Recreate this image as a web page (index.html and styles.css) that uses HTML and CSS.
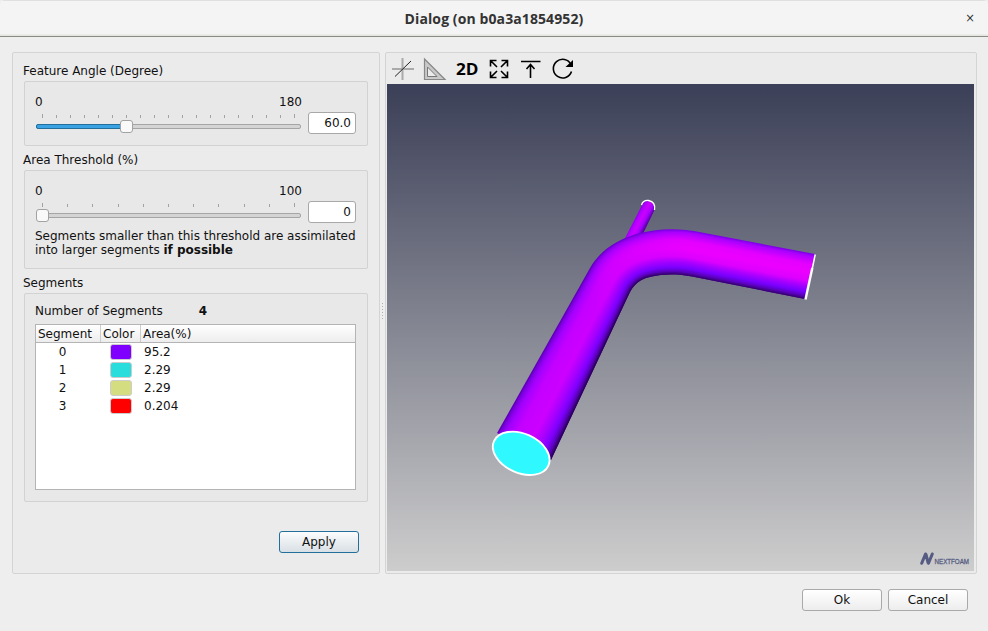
FILE: index.html
```html
<!DOCTYPE html>
<html lang="en">
<head>
<meta charset="utf-8">
<title>Dialog</title>
<link rel="stylesheet" href="styles.css">
</head>
<body>
<header class="titlebar"><h1>Dialog (on b0a3a1854952)</h1><span class="close">×</span></header>
<main class="content">
  <section class="panel settings">
    <h2>Feature Angle (Degree)</h2>
    <div class="group angle">
      <div class="row">
        <div class="range">
          <div class="limits"><span>0</span><span>180</span></div>
          <svg class="slider" width="266" height="24" data-steps="18" data-value="6"></svg>
        </div>
        <div class="field">60.0</div>
      </div>
    </div>
    <h2>Area Threshold (%)</h2>
    <div class="group area">
      <div class="row">
        <div class="range">
          <div class="limits"><span>0</span><span>100</span></div>
          <svg class="slider" width="266" height="24" data-steps="10" data-value="0"></svg>
        </div>
        <div class="field">0</div>
      </div>
      <p>Segments smaller than this threshold are assimilated<br>into larger segments <b>if possible</b></p>
    </div>
    <h2>Segments</h2>
    <div class="group segments">
      <div class="count"><span>Number of Segments</span><b>4</b></div>
      <div class="table">
        <div class="thead"><span>Segment</span><span>Color</span><span>Area(%)</span></div>
        <div class="trow"><span>0</span><i class="swatch violet"></i><span>95.2</span></div>
        <div class="trow"><span>1</span><i class="swatch cyan"></i><span>2.29</span></div>
        <div class="trow"><span>2</span><i class="swatch olive"></i><span>2.29</span></div>
        <div class="trow"><span>3</span><i class="swatch red"></i><span>0.204</span></div>
      </div>
    </div>
    <button class="btn apply">Apply</button>
  </section>
  <div class="handle"></div>
  <section class="panel viewer">
    <div class="toolbar">
      <svg width="200" height="31" viewBox="387 53 200 31" fill="none">
        <path d="M392 69H414M402.500 58V80" stroke="#aaa" stroke-width="2"/>
        <path d="M395 76.500L411 61" stroke="#222" stroke-width="1"/>
        <path d="M424.500 59V79.500H445Z" fill="#c9c9c9" stroke="#888" stroke-width="1.200"/>
        <path d="M427.500 67V76.500H437Z" fill="#ebebeb" stroke="#777"/>
        <text x="456" y="75" class="two-d" textLength="22.500" lengthAdjust="spacingAndGlyphs">2D</text>
        <g stroke="#000" stroke-width="1.600">
          <path d="M490.500 66.500V60.500H496.500M490.500 60.500L497 67M501.500 60.500H507.500V66.500M507.500 60.500L501 67M490.500 71.500V77.500H496.500M490.500 77.500L497 71M501.500 77.500H507.500V71.500M507.500 77.500L501 71"/>
          <path d="M521 61.500H540.500M530.500 78V65M526.500 69L530.500 64.500L534.500 69"/>
          <path d="M571 64.500A9.300 9.300 0 1 0 571.500 71.500"/>
        </g>
        <path d="M573 60V67H565.500Z" fill="#000"/>
      </svg>
    </div>
    <svg class="scene" width="587" height="487" viewBox="387 84 587 487">
      <defs>
        <linearGradient id="bg" x2="0" y2="1"><stop stop-color="#3b3f57"/><stop offset="1" stop-color="#cdcdcd"/></linearGradient>
        <linearGradient id="branch" gradientUnits="userSpaceOnUse" x1="633" y1="219" x2="646" y2="226"><stop stop-color="#7a00d8"/><stop offset=".25" stop-color="#b000ff"/><stop offset=".5" stop-color="#cc00ff"/><stop offset=".75" stop-color="#a800ff"/><stop offset="1" stop-color="#5b00a8"/></linearGradient>
      </defs>
      <rect x="387" y="84" width="587" height="487" fill="url(#bg)"/>
      <path d="M624 240L641.500 206Q643 201 648.500 201Q655 203 654.500 210L640 240Z" fill="url(#branch)"/>
      <path d="M641.500 205Q643 200 648.500 200.500Q656 202 654.500 210" fill="none" stroke="#fff" stroke-width="1.300"/>
      <g id="pipe"></g>
      <path d="M815.200 254.500L812 270" stroke="#fff" stroke-width="1.500"/>
      <path d="M812.300 268L805.500 299.500" stroke="#fff" stroke-width="2.400"/>
      <ellipse cx="521.200" cy="453.300" rx="29.800" ry="19.600" transform="rotate(24.200 521.200 453.300)" fill="#2ff9ff" stroke="#fff" stroke-width="1.900"/>
      <path d="M921.700 563.300L925.500 554M928.500 563.300L932.300 554M926 554.500L928.200 563" stroke="#555b82" stroke-width="3" stroke-linecap="round" fill="none"/>
      <text class="brand" x="934.500" y="564" textLength="34.500" lengthAdjust="spacingAndGlyphs">NEXTFOAM</text>
    </svg>
  </section>
</main>
<footer><button class="btn">Ok</button><button class="btn">Cancel</button></footer>
<script src="scene.js"></script>
</body>
</html>
```
FILE: styles.css
```css
* { box-sizing: border-box; }
body { margin: 0; width: 988px; height: 631px; overflow: hidden; background: #eee; color: #111; font: 12px/14px "DejaVu Sans", sans-serif; }
.titlebar { height: 37px; background: linear-gradient(#e0e0e0 0 1px, #f4f4f4 1px 34px, #e4e4e0 35px); border-bottom: 1px solid #8a8c84; border-radius: 5px 5px 0 0; display: grid; grid-template-columns: 36px 1fr 36px; align-items: center; }
.titlebar h1 { grid-column: 2; margin: 2px 0 0; font: bold 14px/20px "Open Sans", sans-serif; letter-spacing: .1px; color: #333; text-align: center; }
.close { text-align: center; font-size: 11.5px; color: #333; }
.content { display: flex; padding: 15px 0 0 12px; }
.panel { height: 522px; border: 1px solid #d4d4d4; border-radius: 2px; background: #ebebeb; }
.settings { width: 368px; padding: 11px 11px 0 10px; display: flex; flex-direction: column; }
h2 { margin: 0 0 3px; font: inherit; height: 14px; }
.group { margin: 0 0 7px 1px; border: 1px solid #d2d2d2; border-radius: 2px; background: #e8e8e8; padding: 13px 11px 0 10px; }
.angle { height: 65px; }
.area { height: 99px; }
.segments { height: 209px; padding-top: 10px; margin-bottom: 29px; }
.row { display: flex; justify-content: space-between; }
.range { width: 267px; height: 46px; }
.limits { display: flex; justify-content: space-between; }
.slider { display: block; margin-top: 4px; }
.field { margin-top: 17px; width: 48px; height: 22px; border: 1px solid #a8a8a8; border-radius: 3px; background: #fff; text-align: right; padding: 3px 4px 0 0; }
.area p { margin: -1px -5px 0 0; white-space: nowrap; height: 28px; letter-spacing: -.01px; }
.count { display: flex; gap: 36px; height: 20px; }
.table { height: 166px; border: 1px solid #b4b4b4; background: #fff; }
.thead, .trow { display: grid; grid-template-columns: 65px 40px 1fr; height: 18px; }
.thead { background: linear-gradient(#fff, #ededed); border-bottom: 1px solid #b4b4b4; }
.thead span { padding: 2px 0 0 2px; border-right: 1px solid #ccc; }
.thead span:last-child { border: 0; }
.trow { align-items: center; }
.trow span:first-child { text-align: center; padding-right: 12px; }
.trow span:last-child { padding-left: 3px; }
.swatch { width: 22px; height: 16px; margin-left: 9px; border: 1px solid #ccc; border-radius: 3px; }
.violet { background: #8000ff; }
.cyan { background: #2adddd; }
.olive { background: #d4dd80; }
.red { background: #f00; }
.btn { width: 80px; height: 22px; padding: 0 0 1px; border: 1px solid #a9a9a9; border-radius: 3px; background: linear-gradient(#fff, #ededed); font: inherit; color: #111; }
.apply { align-self: flex-end; margin-right: 9px; border-color: #236f9c; background: linear-gradient(#fbfcfd, #d9e0e5); }
.handle { width: 5px; height: 18px; margin-top: 251px; background: repeating-linear-gradient(#b0b0b0 0 1px, transparent 1px 3px) 2px 0 / 1px 18px no-repeat; }
.viewer { width: 592px; padding-left: 1px; }
.toolbar { height: 31px; }
.toolbar svg, .scene { display: block; }
.two-d { font: bold 16px "Open Sans", sans-serif; fill: #000; }
.brand { font: 8px "Liberation Sans", sans-serif; fill: #555b82; stroke: #555b82; stroke-width: .3px; }
footer { display: flex; justify-content: flex-end; gap: 6px; padding: 15px 20px 0 0; }
```
FILE: scene.js
```js
// Sliders: ticks, groove, filled part and thumb.
document.querySelectorAll('.slider').forEach(function (s) {
  var n = +s.dataset.steps, v = +s.dataset.value, out = '';
  for (var i = 0; i <= n; i++) {
    var x = Math.round(7 + 252 * i / n), y = (i === 0 || i === n) ? 1 : 2;
    out += '<rect x="' + x + '" y="' + y + '" width="1" height="' + (5 - y) + '" fill="#a2a2a2"/>';
  }
  var c = 7.5 + 252 * v / n;
  out += '<rect x="1.5" y="11.5" width="264" height="4" rx="1.5" fill="#d4d4d4" stroke="#a5a5a5"/>';
  if (v) out += '<rect x="1.5" y="11.5" width="' + (c - 2) + '" height="4" rx="1.5" fill="#3ba3e3" stroke="#236f9c"/>';
  out += '<rect x="' + (c - 6) + '" y="7.500" width="12" height="12" rx="2.5" fill="#f9f9f9" stroke="#a2a2a2"/>';
  s.innerHTML = out;
});

// Pipe: overlapping strips interpolated between its outer and inner silhouettes.
var outer = [497,433, 590,268, 601,249, 618,239, 640,233, 660,228, 680,228, 702,232.5, 815,254];
var inner = [551,460, 630,292, 636,281, 644,278, 652,276.5, 662,274, 678,273.5, 692,276.5, 805,299];
var near = [[0,85,0,170],[.05,125,0,225],[.14,165,0,255],[.3,196,0,255],[.58,204,0,255],[.73,165,0,255],[.84,128,0,255],[.92,95,0,195],[1,35,0,75]];
var far = [[0,115,0,225],[.06,170,0,255],[.24,228,0,255],[.42,236,0,255],[.6,220,0,255],[.72,165,0,255],[.84,120,0,255],[.93,90,0,190],[1,50,0,100]];
function shade(ramp, t) {
  var i = 1;
  while (i < ramp.length - 1 && ramp[i][0] < t) i++;
  var a = ramp[i - 1], b = ramp[i], k = (t - a[0]) / (b[0] - a[0]);
  return 'rgb(' + [1, 2, 3].map(function (j) { return Math.round(a[j] + (b[j] - a[j]) * k); }).join(',') + ')';
}
function curve(t) { return outer.map(function (v, i) { return v + (inner[i] - v) * t; }); }
// Each strip ends at its own lower edge plus one strip of overlap, so silhouettes stay clean.
var N = 36, svg = '';
for (var i = 0; i < N; i++) {
  var t = (i + .5) / N, p = curve(i / N), e = curve(Math.min(1, (i + 2) / N));
  svg += '<linearGradient id="s' + i + '" gradientUnits="userSpaceOnUse" x1="590" y1="300" x2="690" y2="250"><stop stop-color="' + shade(near, t) + '"/><stop offset="1" stop-color="' + shade(far, t) + '"/></linearGradient>';
  svg += '<path fill="url(#s' + i + ')" d="M' + p.slice(0, 2) + 'L' + p.slice(2, 4) + 'C' + p.slice(4, 10) + 'C' + p.slice(10, 16) + 'L' + p.slice(16) +
    'L' + e.slice(16) + 'L' + e.slice(14, 16) + 'C' + [e[12], e[13], e[10], e[11], e[8], e[9]] + 'C' + [e[6], e[7], e[4], e[5], e[2], e[3]] + 'L' + e.slice(0, 2) + 'Z"/>';
}
document.getElementById('pipe').innerHTML = svg;
```
